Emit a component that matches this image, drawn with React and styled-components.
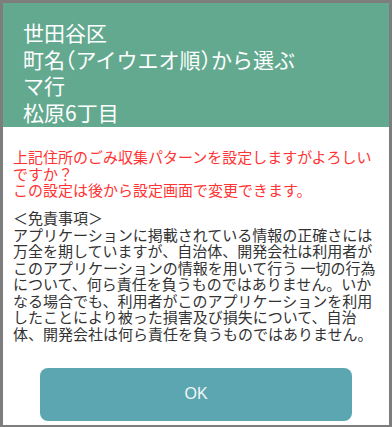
import React from 'react';
import styled, {createGlobalStyle} from "styled-components";

const GlobalStyle = createGlobalStyle`
  html, body {
    margin: 0;
    padding: 0;
    background: #ffffff;
  }
`;

const Frame = styled.div`
  box-sizing: border-box;
  width: 392px;
  height: 427px;
  border: 3px solid #7d7d7d;
  border-bottom-width: 2px;
  background: #ffffff;
  overflow: hidden;
  display: flex;
  flex-direction: column;
  font-family: "Noto Sans CJK JP", "Noto Sans", sans-serif;
`;

const Header = styled.div`
  background-color: #63a98f;
  color: #ffffff;
  font-size: 21px;
  line-height: 26.7px;
  padding: 16px 20px 1px;
`;

const Paren = styled.span`
  font-feature-settings: "halt";
`;

const Body = styled.div`
  padding: 22.5px 10px 0;
  font-size: 15px;
  line-height: 16.5px;
`;

const Notice = styled.p`
  margin: 0;
  color: #ff3434;
`;

const Disclaimer = styled.p`
  margin: 11.5px 0 0;
  color: #333333;
`;

const Button = styled.button`
  display: block;
  box-sizing: border-box;
  width: 312px;
  height: 53px;
  margin: 25.5px auto 0;
  border: none;
  border-radius: 8px;
  background-color: #5ba6b1;
  color: #f2f6f7;
  font-family: "Liberation Sans", Arial, sans-serif;
  font-size: 16px;
`;

const App = () => {
    return (
        <>
            <GlobalStyle/>
            <Frame>
                <Header>
                    <div>世田谷区</div>
                    <div>町名<Paren>（</Paren>アイウエオ順<Paren>）</Paren>から選ぶ</div>
                    <div>マ行</div>
                    <div>松原6丁目</div>
                </Header>
                <Body>
                    <Notice>
                        上記住所のごみ収集パターンを設定しますがよろしいですか？<br/>
                        この設定は後から設定画面で変更できます。
                    </Notice>
                    <Disclaimer>
                        ＜免責事項＞<br/>
                        アプリケーションに掲載されている情報の正確さには万全を期していますが、自治体、開発会社は利用者がこのアプリケーションの情報を用いて行う 一切の行為について、何ら責任を負うものではありません。いかなる場合でも、利用者がこのアプリケーションを利用したことにより被った損害及び損失について、自治体、開発会社は何ら責任を負うものではありません。
                    </Disclaimer>
                    <Button>OK</Button>
                </Body>
            </Frame>
        </>
    );
};

export default App;
